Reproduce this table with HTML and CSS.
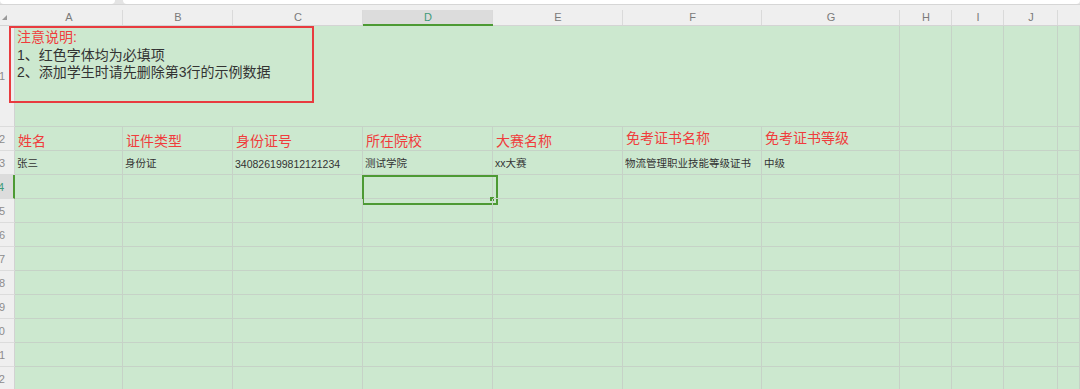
FILE: index.html
```html
<!DOCTYPE html>
<html lang="zh-CN">
<head>
<meta charset="utf-8">
<title>Sheet</title>
<link rel="stylesheet" href="styles.css">
</head>
<body>
<div class="topbar">
  <div class="tb-box tb-name"></div>
  <div class="tb-box tb-formula"></div>
</div>
<div class="sheet">
  <div class="ch corner"><span class="tri"></span></div>
  <div class="ch">A</div>
  <div class="ch">B</div>
  <div class="ch">C</div>
  <div class="ch active">D</div>
  <div class="ch">E</div>
  <div class="ch">F</div>
  <div class="ch">G</div>
  <div class="ch">H</div>
  <div class="ch">I</div>
  <div class="ch">J</div>
  <div class="ch last"></div>

  <div class="rh"><span>1</span></div>
  <div class="c merged"></div>
  <div class="c"></div><div class="c"></div><div class="c"></div><div class="c"></div>

  <div class="rh"><span>2</span></div>
  <div class="c hd">姓名</div>
  <div class="c hd">证件类型</div>
  <div class="c hd">身份证号</div>
  <div class="c hd">所在院校</div>
  <div class="c hd">大赛名称</div>
  <div class="c hd mid">免考证书名称</div>
  <div class="c hd mid">免考证书等级</div>
  <div class="c"></div><div class="c"></div><div class="c"></div><div class="c"></div>

  <div class="rh"><span>3</span></div>
  <div class="c dt">张三</div>
  <div class="c dt">身份证</div>
  <div class="c dt">340826199812121234</div>
  <div class="c dt">测试学院</div>
  <div class="c dt">xx大赛</div>
  <div class="c dt">物流管理职业技能等级证书</div>
  <div class="c dt">中级</div>
  <div class="c"></div><div class="c"></div><div class="c"></div><div class="c"></div>

  <div class="rh active"><span>4</span></div>
  <div class="c"></div><div class="c"></div><div class="c"></div>
  <div class="c selected"><span class="handle"></span></div>
  <div class="c"></div><div class="c"></div><div class="c"></div>
  <div class="c"></div><div class="c"></div><div class="c"></div><div class="c"></div>

  <div class="rh"><span>5</span></div>
  <div class="c"></div><div class="c"></div><div class="c"></div><div class="c"></div><div class="c"></div><div class="c"></div><div class="c"></div><div class="c"></div><div class="c"></div><div class="c"></div><div class="c"></div>
  <div class="rh"><span>6</span></div>
  <div class="c"></div><div class="c"></div><div class="c"></div><div class="c"></div><div class="c"></div><div class="c"></div><div class="c"></div><div class="c"></div><div class="c"></div><div class="c"></div><div class="c"></div>
  <div class="rh"><span>7</span></div>
  <div class="c"></div><div class="c"></div><div class="c"></div><div class="c"></div><div class="c"></div><div class="c"></div><div class="c"></div><div class="c"></div><div class="c"></div><div class="c"></div><div class="c"></div>
  <div class="rh"><span>8</span></div>
  <div class="c"></div><div class="c"></div><div class="c"></div><div class="c"></div><div class="c"></div><div class="c"></div><div class="c"></div><div class="c"></div><div class="c"></div><div class="c"></div><div class="c"></div>
  <div class="rh"><span>9</span></div>
  <div class="c"></div><div class="c"></div><div class="c"></div><div class="c"></div><div class="c"></div><div class="c"></div><div class="c"></div><div class="c"></div><div class="c"></div><div class="c"></div><div class="c"></div>
  <div class="rh"><span>10</span></div>
  <div class="c"></div><div class="c"></div><div class="c"></div><div class="c"></div><div class="c"></div><div class="c"></div><div class="c"></div><div class="c"></div><div class="c"></div><div class="c"></div><div class="c"></div>
  <div class="rh"><span>11</span></div>
  <div class="c"></div><div class="c"></div><div class="c"></div><div class="c"></div><div class="c"></div><div class="c"></div><div class="c"></div><div class="c"></div><div class="c"></div><div class="c"></div><div class="c"></div>
  <div class="rh"><span>12</span></div>
  <div class="c"></div><div class="c"></div><div class="c"></div><div class="c"></div><div class="c"></div><div class="c"></div><div class="c"></div><div class="c"></div><div class="c"></div><div class="c"></div><div class="c"></div>

  <div class="notebox">
    <div class="note-title">注意说明:</div>
    <div>1、红色字体均为必填项</div>
    <div>2、添加学生时请先删除第3行的示例数据</div>
  </div>
</div>
</body>
</html>
```

FILE: styles.css
```css
* { box-sizing: border-box; }
html, body {
  margin: 0;
  padding: 0;
  width: 1080px;
  height: 389px;
  overflow: hidden;
  background: #cce8cf;
  font-family: "Liberation Sans", "Noto Sans CJK SC", sans-serif;
}
.topbar {
  height: 5px;
  background: #e4e4e4;
  display: flex;
  gap: 8px;
  border-bottom: 1px solid #d6d6d6;
}
.tb-box {
  background: #ffffff;
  height: 4px;
  border-radius: 0 0 4px 4px;
}
.tb-name { width: 115px; }
.tb-formula { flex: 1; }

.sheet {
  position: relative;
  display: grid;
  grid-template-columns: 15px 108px 110px 130px 130px 130px 139px 138px 52px 52px 54px 1fr;
  grid-template-rows: 21px 101px repeat(11, 24px);
}
.ch {
  background: #efefef;
  border-bottom: 1px solid #d4d4d4;
  display: flex;
  align-items: flex-end;
  justify-content: center;
  font-size: 11px;
  color: #7a7a7a;
  padding-bottom: 2px;
  position: relative;
}
.ch::after {
  content: "";
  position: absolute;
  right: 0;
  bottom: 0;
  top: 5px;
  width: 1px;
  background: #dadada;
}
.ch.corner::after { display: none; }
.ch.last::after { display: none; }
.ch.active {
  background: linear-gradient(#efefef 0, #efefef 5px, #dcdcdc 5px);
  color: #3e9a78;
  border-bottom: 2px solid #4d9a34;
  padding-bottom: 1px;
}
.corner { position: relative; }
.tri {
  position: absolute;
  left: 2px;
  top: 10px;
  width: 0;
  height: 0;
  border-left: 5px solid transparent;
  border-bottom: 5px solid #9a9a9a;
}

.rh {
  background: #efefef;
  border-right: 1px solid #d2d2d2;
  border-bottom: 1px solid #dcdcdc;
  display: flex;
  align-items: center;
  justify-content: flex-end;
  padding-right: 9px;
  overflow: hidden;
  font-size: 11px;
  color: #8c8c8c;
  white-space: nowrap;
}
.rh.active {
  background: #dcdcdc;
  color: #3e9a78;
  border-right: 2px solid #4d9a34;
}

.c {
  border-right: 1px solid #c6d2c7;
  border-bottom: 1px solid #c6d2c7;
  display: flex;
  align-items: flex-end;
  padding: 0 3px 2px;
  white-space: nowrap;
  overflow: visible;
  color: #333333;
  position: relative;
}
.merged {
  grid-column: span 7;
}
.hd {
  font-size: 14px;
  color: #f03c3c;
  padding-bottom: 0;
  padding-left: 3px;
}
.hd.mid {
  align-items: center;
  padding-bottom: 3px;
}
.dt {
  font-size: 10.5px;
  padding-bottom: 4px;
  padding-left: 2px;
}
.selected::before {
  content: "";
  position: absolute;
  left: -1px;
  top: 0;
  width: 132px;
  height: 26px;
  border: 2px solid #4d9a34;
}
.handle {
  position: absolute;
  right: -2px;
  bottom: -3px;
  width: 4px;
  height: 4px;
  background: #4d9a34;
}

.notebox {
  position: absolute;
  left: 9px;
  top: 21px;
  width: 305px;
  height: 77px;
  border: 2px solid #e83b3f;
  padding: 1px 0 0 6px;
  font-size: 14px;
  line-height: 17.5px;
  color: #333333;
}
.note-title {
  color: #f03c3c;
}
```
